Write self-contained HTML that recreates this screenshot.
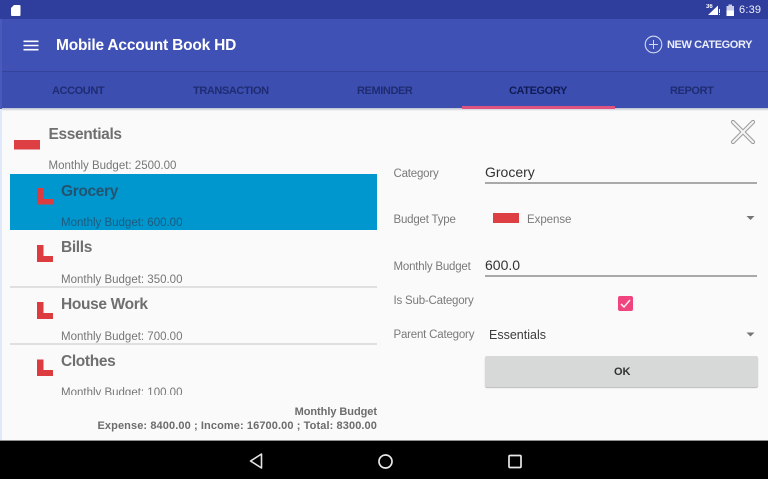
<!DOCTYPE html>
<html><head><meta charset="utf-8"><style>
html,body{margin:0;padding:0;background:#fafafa}
#r{position:relative;width:768px;height:479px;overflow:hidden;background:#fafafa;font-family:"Liberation Sans",sans-serif}
#r div,#r span.t{position:absolute}
.t{white-space:nowrap;line-height:1;filter:blur(.25px)}
.tab{font-size:11px;font-weight:bold;top:85.500px;color:#1f2c72;letter-spacing:-.4px}
.nm{font-size:15.500px;font-weight:bold;color:#6f6f6f;letter-spacing:-.35px}
.sb{font-size:11.500px;color:#767676}
.lb{font-size:11.500px;color:#7a7a7a;letter-spacing:-.2px}
.ln{background:#e0e0e0;height:2px;left:10px;width:367px}
</style></head><body><div id="r">
<div style="left:0;top:0;width:768px;height:19px;background:#2f3d9c"></div>
<div style="left:0;top:19px;width:768px;height:52px;background:#3f51b5"></div>
<div style="left:0;top:71px;width:768px;height:1px;background:#33429b"></div>
<div style="left:0;top:72px;width:768px;height:36px;background:#3c4eb0"></div>
<div style="left:0;top:108px;width:768px;height:3px;background:linear-gradient(#b9bdcc,#fafafa)"></div>
<div style="left:0;top:108px;width:2px;height:333px;background:#dfe9fb"></div>
<div style="left:0;top:19px;width:2px;height:90px;background:#4a5abb"></div>

<svg style="position:absolute;left:0;top:0" width="768" height="441">
<path d="M11 8 14 5H19.500Q20.500 5 20.500 6V15Q20.500 16 19.500 16H12Q11 16 11 15Z" fill="#fff"/>
<path d="M23.500 41.300H38.500M23.500 45.500H38.500M23.500 49.700H38.500" stroke="#fff" stroke-width="1.600"/>
<circle cx="653.500" cy="44.500" r="8.300" fill="none" stroke="#d5d9ef" stroke-width="1.100"/>
<path d="M653.500 40V49M649 44.500H658" stroke="#d5d9ef" stroke-width="1"/>
<path d="M708 15 718 5.500V15Z" fill="#fff"/>
<path d="M719.500 9V13M719.500 14V15" stroke="#fff" stroke-width=".9"/>
<path d="M726.500 6H728.500V4.500H732V6H734V16H726.500Z" fill="#c9cde8"/>
<path d="M726.500 10.500H734V16H726.500Z" fill="#fff"/>
<path d="M733 122 753 142M753 122 733 142" stroke="#9a9a9a" stroke-width="4.200" stroke-linecap="round"/>
<path d="M733 122 753 142M753 122 733 142" stroke="#f4f4f4" stroke-width="2.200" stroke-linecap="round"/>
<path d="M14 140H40V149.500H14Z" fill="#dd3f43"/>
<path d="M37 245H43.500V256H53V262H37Z" fill="#dc3c40"/>
<path d="M37 302H43.500V313H53V319H37Z" fill="#dc3c40"/>
<path d="M37 359.500H43.500V370H53V376H37Z" fill="#dc3c40"/>
<path d="M746.500 216H754.500L750.500 220Z" fill="#757575"/>
<path d="M746.500 332.500H754.500L750.500 336.500Z" fill="#757575"/>
</svg>

<span class="t" style="left:739px;top:5px;font-size:11px;color:#eef0fa;letter-spacing:.2px">6:39</span>
<span class="t" style="left:706px;top:4px;font-size:6px;color:#fff;font-weight:bold">36</span>
<span class="t" style="left:56px;top:38px;font-size:15.500px;color:#fff;font-weight:bold;letter-spacing:-.2px">Mobile Account Book HD</span>
<span class="t" style="left:667px;top:40px;font-size:11px;color:#eceef8;font-weight:bold;letter-spacing:-.4px">NEW CATEGORY</span>

<span class="t tab" style="left:52px">ACCOUNT</span>
<span class="t tab" style="left:193px">TRANSACTION</span>
<span class="t tab" style="left:357px">REMINDER</span>
<span class="t tab" style="left:509px;color:#111b55">CATEGORY</span>
<span class="t tab" style="left:670px">REPORT</span>
<div style="left:462px;top:106px;width:153px;height:3px;background:#e0527f"></div>

<span class="t nm" style="left:48.500px;top:126.500px">Essentials</span>
<span class="t sb" style="left:48.500px;top:160.500px">Monthly Budget: 2500.00</span>

<div style="left:10px;top:174px;width:367px;height:56px;background:#0097cf"></div>
<svg style="position:absolute;left:0;top:0" width="60" height="230"><path d="M37 188H43.500V199H53V204.500H37Z" fill="#dc3c40"/></svg>
<span class="t nm" style="left:61px;top:183.500px;color:#24536f">Grocery</span>
<span class="t sb" style="left:61px;top:217.500px;color:#1d5a7c">Monthly Budget: 600.00</span>

<span class="t nm" style="left:61px;top:240px">Bills</span>
<span class="t sb" style="left:61px;top:274.500px">Monthly Budget: 350.00</span>
<div class="ln" style="top:286px"></div>
<span class="t nm" style="left:61px;top:297px">House Work</span>
<span class="t sb" style="left:61px;top:331.500px">Monthly Budget: 700.00</span>
<div class="ln" style="top:343px"></div>
<span class="t nm" style="left:61px;top:354px">Clothes</span>
<div style="left:50px;top:386px;width:200px;height:9px;overflow:hidden"><span class="t sb" style="left:11px;top:1.500px">Monthly Budget: 100.00</span></div>

<span class="t" style="right:391px;top:407px;font-size:11px;font-weight:bold;color:#6c6c6c;letter-spacing:-.05px">Monthly Budget</span>
<span class="t" style="right:391px;top:421px;font-size:11px;font-weight:bold;color:#6c6c6c;letter-spacing:.1px">Expense: 8400.00 ; Income: 16700.00 ; Total: 8300.00</span>

<span class="t lb" style="left:393.500px;top:168.500px">Category</span>
<span class="t" style="left:485px;top:165px;font-size:14px;color:#333">Grocery</span>
<div style="left:485px;top:182px;width:272px;height:2px;background:#a9a9a9"></div>
<span class="t lb" style="left:393.500px;top:214.500px">Budget Type</span>
<div style="left:493px;top:213px;width:26px;height:9.500px;background:#dd3f43"></div>
<span class="t lb" style="left:527px;top:214.500px;letter-spacing:-.05px">Expense</span>
<span class="t lb" style="left:393.500px;top:261.500px">Monthly Budget</span>
<span class="t" style="left:485px;top:258px;font-size:14px;color:#333">600.0</span>
<div style="left:485px;top:275px;width:272px;height:2px;background:#a9a9a9"></div>
<span class="t lb" style="left:393.500px;top:295.500px">Is Sub-Category</span>
<div style="left:618px;top:296px;width:14.500px;height:14.500px;border-radius:2px;background:#f0447f"></div>
<svg style="position:absolute;left:618px;top:296px" width="15" height="15"><path d="M3 8 6 11 12 4" fill="none" stroke="#fbe4ec" stroke-width="1.600"/></svg>
<span class="t lb" style="left:393.500px;top:330px">Parent Category</span>
<span class="t" style="left:489px;top:328.500px;font-size:12.500px;color:#3c3c3c">Essentials</span>
<div style="left:485px;top:356px;width:273px;height:31px;border-radius:2px;background:#d7d8d8;box-shadow:0 1px 1px #b8b8b8"></div>
<span class="t" style="left:614px;top:367px;font-size:11px;font-weight:bold;color:#333;letter-spacing:-.1px">OK</span>

<div style="left:0;top:440px;width:768px;height:1px;background:#8f8f8f"></div>
<div style="left:0;top:441px;width:768px;height:38px;background:#000"></div>
<svg style="position:absolute;left:0;top:441px" width="768" height="38">
<path d="M261.500 13 250.500 20 261.500 27Z" fill="none" stroke="#e4e4e4" stroke-width="1.600" stroke-linejoin="round"/>
<circle cx="385.500" cy="20.500" r="6.500" fill="none" stroke="#e8e8e8" stroke-width="1.700"/>
<rect x="509" y="14.500" width="12" height="12" rx="1" fill="none" stroke="#e8e8e8" stroke-width="1.700"/>
</svg>
</div></body></html>
